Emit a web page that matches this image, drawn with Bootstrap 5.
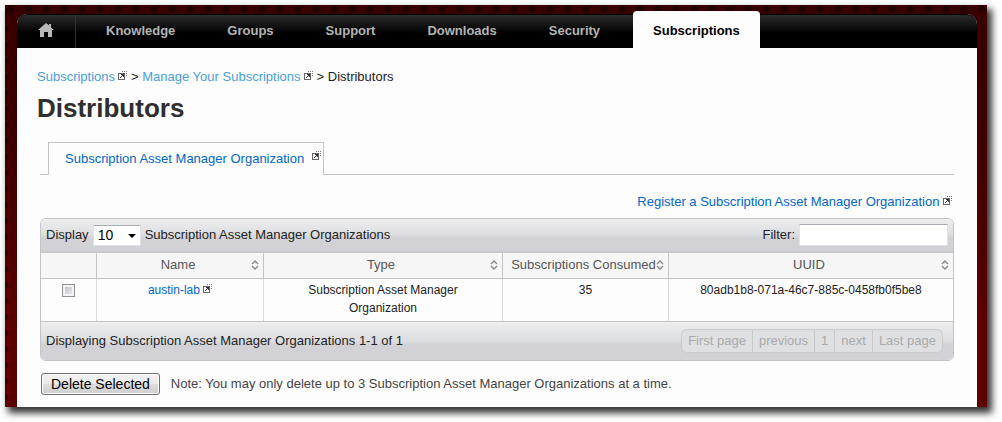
<!DOCTYPE html>
<html lang="en">
<head>
<meta charset="utf-8">
<meta name="viewport" content="width=device-width, initial-scale=1">
<title>Distributors</title>
<link href="https://cdn.jsdelivr.net/npm/bootstrap@5.3.0/dist/css/bootstrap.min.css" rel="stylesheet">
<style>
  body { font: 13px/18px "Liberation Sans", Arial, sans-serif; color: #222; background: #fff; }
  a { color: #06c; text-decoration: none; }
  .ext { width: 9px; height: 9px; vertical-align: 1px; }
  .stage {
    margin: 5px 15px 15px 5px; padding: 9px 10px 0 12px;
    background-color: #340000;
    background-image:
      radial-gradient(circle at 5px 4px, rgba(20,0,0,.6) 3px, transparent 4px),
      radial-gradient(circle at 1px 8px, rgba(20,0,0,.5) 2px, transparent 3px),
      linear-gradient(#380000, #3c0000 30%, #5c0000 80%);
    background-size: 18px 19px, 982px 16px, 100% 100%;
    background-repeat: repeat-x, repeat-y, no-repeat;
    box-shadow: 4px 5px 7px 1px rgba(0,0,0,.8);
  }
  .panel { background: #fdfdfd; border-radius: 10px 10px 0 0; }
  .topnav { background: linear-gradient(#2c2c2c, #000 55%); border-top: 1px solid #000; border-radius: 10px 10px 0 0; height: 34px; }
  .topnav .nav-link { color: #b4b4b4; font-weight: bold; padding: 0 26px; line-height: 32px; border-radius: 0; }
  .topnav .home { width: 59px; padding: 0 0 3px; border-right: 1px solid #333; height: 33px; margin-right: 4px; }
  .topnav .nav-link.active { color: #000; background: #fdfdfd; border-radius: 4px 4px 0 0; margin: -4px 0 0 7px; padding: 4px 20px 1px; height: 37px; }
  .content { padding: 20px 23px 12px; }
  .crumbs { margin-left: -3px; }
  .crumbs a { color: #4a9edc; }
  .crumbs .ext { margin: 0 4px 0 3px; }
  h1 { font-size: 26px; line-height: 34px; font-weight: bold; color: #2f2f2f; margin: 5px 0 17px -3px; }
  .tabs { border-bottom: 1px solid #c4c4c4; padding-left: 8px; }
  .tabs a { border: 1px solid #c4c4c4; border-bottom: 0; background: #fdfdfd; padding: 7px 2px 7px 16px; margin-bottom: -1px; }
  .tabs .ext { margin: 1px 0 0 8px; }
  .register { padding: 18px 2px 7px; }
  .grid-box { border: 1px solid #c4c4c6; border-radius: 6px; }
  .bar { background: linear-gradient(#eeeeef, #dcdddf 50%, #d2d2d6 60%, #d2d2d6); padding: 0 5px; }
  .bar-top { border-bottom: 2px solid #c8c8ca; border-radius: 5px 5px 0 0; height: 34px; }
  .bar-bottom { border-top: 1px solid #c4c4c6; border-radius: 0 0 5px 5px; height: 39px; }
  .bar select, .bar input { border: 1px solid #dfe2e8; border-top-color: #aaadb5; background: #fff; border-radius: 1px; color: #000; }
  .bar select { appearance: none; width: 48px; height: 21px; padding: 0 4px; font-size: 14px; line-height: 18px; }
  .bar input { width: 149px; height: 22px; }
  .picker { position: relative; }
  .picker svg { position: absolute; right: 5px; top: 9px; pointer-events: none; }
  .data { table-layout: fixed; text-align: center; }
  .data th, .data td { border-left: 1px solid #d9d9db; padding: 0; }
  .data th { background: #f6f6f6; color: #555; font-weight: normal; height: 25px; border-left-color: #c4c4c6; border-bottom: 1px solid #c4c4c6; }
  .data th div { padding: 0 4px 0 8px; }
  .data th:first-child, .data td:first-child { border-left: 0; }
  .data td { height: 43px; padding: 2px 24px; vertical-align: top; font-size: 12px; }
  .data td:first-child { padding: 5px 0 0; }
  .tick { appearance: none; width: 13px; height: 13px; border: 1px solid #8e8f8f; background: linear-gradient(135deg, #b4b9c2, #f4f4f4); box-shadow: inset 0 0 0 2px #f4f4f4; display: block; margin: 0 auto; }
  .pages { border: 1px solid #cbcbce; border-radius: 6px; margin-right: 5px; background: #dfe0e2; }
  .pages button { border: 0; border-left: 1px solid #c8c8cb; background: none; padding: 2px 6px; line-height: 18px; color: #aaa; }
  .pages li:first-child button { border-left: 0; }
  .delete { border: 1px solid #707070; border-radius: 3px; background: linear-gradient(#f2f2f2, #ebebeb 50%, #dddddd 50%, #cfcfcf); box-shadow: inset 0 0 0 1px #fbfbfb; color: #000; font-size: 14px; line-height: 20px; padding: 0 9px; }
  .actions { margin: 12px 0 0 1px; gap: 11px; }
  .note { color: #444; }
</style>
</head>
<body>
<svg class="d-none">
  <symbol id="ext" viewBox="0 0 9 9" shape-rendering="crispEdges">
    <path d="M0 2h7v7H0z" fill="#666"/><path d="M1 3h5v5H1z" fill="#fff"/>
    <path d="M3 3h3v3H5V5H4v1H3v1H2V6h1V5h1V4H3z" fill="#333"/>
    <path d="M4 0h1v1H4zM6 0h1v1H6zM8 0h1v1H8zM8 2h1v1H8zM8 4h1v1H8z" fill="#777"/>
  </symbol>
  <symbol id="sort" viewBox="0 0 8 10"><path d="M1 4l3-3 3 3M1 6l3 3 3-3" fill="none" stroke="#888" stroke-width="1.4"/></symbol>
</svg>
<div class="stage">
  <div class="panel">
    <nav class="topnav">
      <ul class="nav flex-nowrap">
        <li><a class="nav-link home d-flex align-items-center justify-content-center" href="#" aria-label="Home"><svg width="16" height="14" viewBox="0 0 16 14"><path d="M8 0L0 7h2v7h4V9h4v5h4V7h2l-3-2.600V1h-2v1.600z" fill="#b8b8b8"/></svg></a></li>
        <li><a class="nav-link" href="#">Knowledge</a></li>
        <li><a class="nav-link" href="#">Groups</a></li>
        <li><a class="nav-link" href="#">Support</a></li>
        <li><a class="nav-link" href="#">Downloads</a></li>
        <li><a class="nav-link" href="#">Security</a></li>
        <li><a class="nav-link active" aria-current="page" href="#">Subscriptions</a></li>
      </ul>
    </nav>
    <main class="content">
      <div class="crumbs"><a href="#">Subscriptions<svg class="ext"><use href="#ext"/></svg></a>&gt; <a href="#">Manage Your Subscriptions<svg class="ext"><use href="#ext"/></svg></a>&gt; Distributors</div>
      <h1>Distributors</h1>
      <div class="tabs d-flex"><a href="#" class="d-flex">Subscription Asset Manager Organization<svg class="ext"><use href="#ext"/></svg></a></div>
      <div class="register text-end"><a href="#">Register a Subscription Asset Manager Organization <svg class="ext"><use href="#ext"/></svg></a></div>
      <div class="grid-box">
        <div class="bar bar-top d-flex align-items-center">
          <label for="size">Display</label>
          <span class="picker mx-1"><select id="size"><option>10</option><option>25</option></select><svg width="8" height="4" viewBox="0 0 8 4"><path d="M0 0h8L4 4z"/></svg></span>
          <span>Subscription Asset Manager Organizations</span>
          <label class="ms-auto me-1" for="filter">Filter:</label><input id="filter" type="text">
        </div>
        <table class="data w-100">
          <colgroup><col style="width:6.1%"><col style="width:18.3%"><col style="width:26.2%"><col style="width:18.2%"><col></colgroup>
          <thead><tr><th></th>
            <th><div class="d-flex align-items-center"><span class="flex-fill">Name</span><svg width="8" height="10"><use href="#sort"/></svg></div></th>
            <th><div class="d-flex align-items-center"><span class="flex-fill">Type</span><svg width="8" height="10"><use href="#sort"/></svg></div></th>
            <th><div class="d-flex align-items-center"><span class="flex-fill text-nowrap">Subscriptions Consumed</span><svg width="8" height="10"><use href="#sort"/></svg></div></th>
            <th><div class="d-flex align-items-center"><span class="flex-fill">UUID</span><svg width="8" height="10"><use href="#sort"/></svg></div></th></tr></thead>
          <tbody><tr><td><input class="tick" type="checkbox" aria-label="Select austin-lab"></td><td><a href="#">austin-lab <svg class="ext"><use href="#ext"/></svg></a></td><td>Subscription Asset Manager Organization</td><td>35</td><td>80adb1b8-071a-46c7-885c-0458fb0f5be8</td></tr></tbody>
        </table>
        <div class="bar bar-bottom d-flex align-items-center justify-content-between">
          <span>Displaying Subscription Asset Manager Organizations 1-1 of 1</span>
          <ul class="pages list-unstyled d-flex mb-0"><li><button>First page</button></li><li><button>previous</button></li><li><button>1</button></li><li><button>next</button></li><li><button>Last page</button></li></ul>
        </div>
      </div>
      <div class="actions d-flex align-items-center"><button class="delete">Delete Selected</button><span class="note">Note: You may only delete up to 3 Subscription Asset Manager Organizations at a time.</span></div>
    </main>
  </div>
</div>
<script src="https://cdn.jsdelivr.net/npm/bootstrap@5.3.0/dist/js/bootstrap.bundle.min.js"></script>
</body>
</html>
